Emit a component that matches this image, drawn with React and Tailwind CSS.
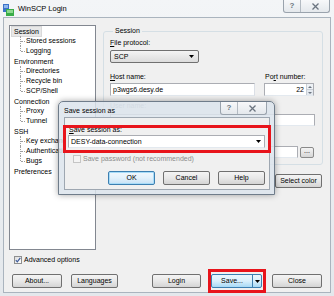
import React from 'react';

const tree = [
  { label: 'Session', selected: true, children: ['Stored sessions', 'Logging'] },
  { label: 'Environment', children: ['Directories', 'Recycle bin', 'SCP/Shell'] },
  { label: 'Connection', children: ['Proxy', 'Tunnel'] },
  { label: 'SSH', children: ['Key exchange', 'Authentication', 'Bugs'] },
  { label: 'Preferences', children: [] },
];

const Arrow = () => (
  <svg width="5" height="3" viewBox="0 0 5 3" className="shrink-0">
    <path d="M0 0H5L2.5 3Z" fill="#000" />
  </svg>
);

const Btn = ({ className = '', children }) => (
  <div
    className={`flex h-[14px] items-center justify-center rounded-[2px] border border-[#707070] bg-gradient-to-b from-[#f4f4f4] via-[#e8e8e8] to-[#d4d4d4] text-black ${className}`}
  >
    {children}
  </div>
);

const Check = ({ checked, disabled }) => (
  <div
    className={`flex h-[8px] w-[8px] shrink-0 items-center justify-center border ${
      disabled ? 'border-[#c5c5c5] bg-[#f4f4f4]' : 'border-[#8e8f8f] bg-gradient-to-br from-[#dcdcdc] to-[#ffffff]'
    }`}
  >
    {checked && (
      <svg width="6" height="6" viewBox="0 0 6 6">
        <path d="M0.8 3.2L2.3 4.8L5.3 0.8" fill="none" stroke="#3c5a9a" strokeWidth="1.2" />
      </svg>
    )}
  </div>
);

const Label = ({ u, rest, className = '' }) => (
  <div className={`h-[10px] ${className}`}>
    <span className="underline">{u}</span>
    {rest}
  </div>
);

const TitleButtons = ({ className = '' }) => (
  <div className={`flex h-[13px] rounded-b-[3px] border border-t-0 border-[#9aa3ad] bg-gradient-to-b from-[#f7f8fa] to-[#e4e8ec] ${className}`}>
    <div className="flex w-[17px] items-center justify-center border-r border-[#b3bac2] text-[8px] font-bold text-[#6b7480]">?</div>
    <div className="flex w-[28px] items-center justify-center">
      <svg width="7" height="7" viewBox="0 0 7 7">
        <path d="M0.5 0.5L6.5 6.5M6.5 0.5L0.5 6.5" stroke="#6b7480" strokeWidth="1.3" />
      </svg>
    </div>
  </div>
);

export default function App() {
  return (
    <div className="relative h-[296px] w-[334px] overflow-hidden bg-gradient-to-b from-[#f3f5f7] to-[#e4e8ec] font-['Liberation_Sans',Arial,sans-serif] text-[7px] leading-[10px] text-black">
      {/* title bar */}
      <div className="flex h-[17px] items-start">
        <svg width="12" height="12" viewBox="0 0 12 12" className="ml-[3px] mt-[4px]">
          <rect x="0" y="0" width="6" height="8" fill="#3b73c8" />
          <rect x="1" y="1" width="4" height="3" fill="#8fb6ee" />
          <rect x="3" y="5" width="8" height="7" fill="#3aad48" />
          <rect x="4" y="6" width="6" height="3" fill="#8ed88f" />
        </svg>
        <span className="ml-[3px] mt-[4px] text-[7.5px] leading-[10px]">WinSCP Login</span>
        <TitleButtons className="ml-auto mr-[4px]" />
      </div>

      {/* client */}
      <div className="ml-[3px] h-[276px] w-[328px] border border-[#aab4be] bg-[#f0f0f0]">
        <div className="flex pl-[5px] pt-[7px]">
          {/* tree */}
          <div className="h-[225px] w-[87px] border border-[#828790] bg-white">
            {tree.map((g) => (
              <div key={g.label}>
                <div className="flex h-[10px] items-center pl-[1px]">
                  <span
                    className={`px-[2px] leading-[9px] ${
                      g.selected ? 'border border-[#d9d9d9] bg-[#e8e8e8]' : 'border border-transparent'
                    }`}
                  >
                    {g.label}
                  </span>
                </div>
                {g.children.map((c, i) => (
                  <div key={c} className="relative flex h-[10px] items-center pl-[16px]">
                    <span
                      className={`absolute left-[10px] top-0 w-0 border-l border-dotted border-[#a0a0a0] ${
                        i === g.children.length - 1 ? 'h-[5px]' : 'h-[10px]'
                      }`}
                    />
                    <span className="absolute left-[11px] top-[5px] w-[4px] border-t border-dotted border-[#a0a0a0]" />
                    <span className="whitespace-nowrap">{c}</span>
                  </div>
                ))}
              </div>
            ))}
          </div>

          {/* right side */}
          <div className="ml-[7px] mt-[1px] w-[219px]">
            <fieldset className="rounded-[3px] border border-[#d5dfe5] pb-[6px] pl-[6px] pr-[7px]">
              <legend className="ml-[3px] px-[2px] leading-[10px]">Session</legend>
              <Label u="F" rest="ile protocol:" className="mt-[2px]" />
              <div className="mt-[2px] flex h-[13px] w-[89px] items-center justify-between rounded-[2px] border border-[#707070] bg-gradient-to-b from-[#f4f4f4] to-[#dcdcdc] pl-[3px] pr-[4px]">
                <span>SCP</span>
                <Arrow />
              </div>
              <div className="mt-[9px] flex">
                <div className="w-[145px]">
                  <Label u="H" rest="ost name:" />
                  <div className="mt-[1px] flex h-[13px] items-center border border-[#abadb3] border-b-[#e3e9ef] border-r-[#dbdfe6] bg-white pl-[2px]">
                    p3wgs6.desy.de
                  </div>
                </div>
                <div className="ml-[9px] w-[50px]">
                  <div className="h-[10px] pl-[1px]">
                    Po<span className="underline">r</span>t number:
                  </div>
                  <div className="mt-[1px] flex h-[13px] items-center justify-end border border-[#abadb3] border-b-[#e3e9ef] bg-white">
                    <span className="mr-[2px]">22</span>
                    <div className="flex h-full w-[7px] flex-col border-l border-[#c8ced6]">
                      <div className="flex flex-1 items-center justify-center bg-[#eef2f6]">
                        <svg width="4" height="2" viewBox="0 0 4 2"><path d="M0 2H4L2 0Z" fill="#6b7480" /></svg>
                      </div>
                      <div className="flex flex-1 items-center justify-center border-t border-[#c8ced6] bg-[#e4e9ef]">
                        <svg width="4" height="2" viewBox="0 0 4 2"><path d="M0 0H4L2 2Z" fill="#6b7480" /></svg>
                      </div>
                    </div>
                  </div>
                </div>
              </div>
              <Label u="U" rest="ser name:" className="mt-[5px] text-[#9aa0a8]" />
              <div className="mt-[3px] h-[12px] w-[205px] border border-[#abadb3] border-b-[#e3e9ef] bg-white" />
              <div className="mt-[6px] h-[10px]" />
              <div className="mt-[4px] flex items-center">
                <div className="h-[12px] w-[188px] border border-[#abadb3] border-b-[#e3e9ef] bg-white" />
                <div className="ml-[2px] flex h-[11px] w-[14px] items-center justify-center rounded-[2px] border border-[#8a8a8a] bg-gradient-to-b from-[#f4f4f4] to-[#d6d6d6] pb-[2px] leading-[6px]">
                  ...
                </div>
              </div>
            </fieldset>
            <div className="mt-[9px] flex justify-end">
              <Btn className="w-[47px]">Select color</Btn>
            </div>
          </div>
        </div>

        {/* advanced options */}
        <div className="ml-[10px] mt-[5px] flex h-[10px] items-center gap-[2px]">
          <Check checked />
          <span>Advanced options</span>
        </div>

        {/* bottom buttons */}
        <div className="mt-[9px] flex">
          <Btn className="ml-[8px] w-[50px]">About...</Btn>
          <Btn className="ml-[9px] w-[47px]">Languages</Btn>
          <Btn className="ml-[34px] w-[49px]">Login</Btn>
          <div className="relative ml-[10px] w-[51px]">
            <div className="flex h-[14px] rounded-[2px] border border-[#3c7fb1] bg-gradient-to-b from-[#eaf6fd] via-[#d9f0fc] to-[#a7d9f5]">
              <div className="flex flex-1 items-center justify-center">Save...</div>
              <div className="flex w-[9px] items-center justify-center border-l border-[#3c7fb1]">
                <Arrow />
              </div>
            </div>
            <div className="absolute -bottom-[5px] -left-[3px] -right-[4px] -top-[5px] border-[3px] border-[#e8141b]" />
          </div>
          <Btn className="ml-[10px] w-[50px]">Close</Btn>
        </div>
      </div>

      {/* Save session as dialog */}
      <div className="absolute left-[58px] top-[101px] h-[94px] w-[217px] rounded-t-[5px] border border-[#6f7c8a] bg-[rgba(220,228,236,0.85)] shadow-[0_0_6px_rgba(0,0,0,0.35)]">
        <div className="flex h-[15px] items-start">
          <span className="ml-[5px] mt-[4px] leading-[10px]">Save session as</span>
          <TitleButtons className="ml-auto mr-[7px]" />
        </div>
        <div className="ml-[5px] h-[73px] w-[206px] border border-[#9ea7b1] bg-[#f0f0f0]">
          <Label u="S" rest="ave session as:" className="ml-[4px] mt-[7px]" />
          <div className="ml-[3px] flex h-[13px] w-[197px] items-center justify-between border border-[#abadb3] border-b-[#e3e9ef] bg-white pl-[2px] pr-[3px]">
            <span>DESY-data-connection</span>
            <Arrow />
          </div>
          <div className="ml-[8px] mt-[6px] flex h-[10px] items-center gap-[2px] text-[#8d8d8d]">
            <Check disabled />
            <span>Save password (not recommended)</span>
          </div>
          <div className="mt-[7px] flex justify-end gap-[8px] pr-[4px]">
            <div className="flex h-[14px] w-[47px] items-center justify-center rounded-[2px] border border-[#3c7fb1] bg-gradient-to-b from-[#f2f8fd] via-[#e3f1fb] to-[#c6e2f6] shadow-[inset_0_0_0_1px_#a8dcf8]">
              OK
            </div>
            <Btn className="w-[47px]">Cancel</Btn>
            <Btn className="w-[47px]">Help</Btn>
          </div>
        </div>
        <div className="absolute left-[4px] top-[23px] h-[28px] w-[208px] border-[3px] border-[#e8141b]" />
      </div>
    </div>
  );
}
